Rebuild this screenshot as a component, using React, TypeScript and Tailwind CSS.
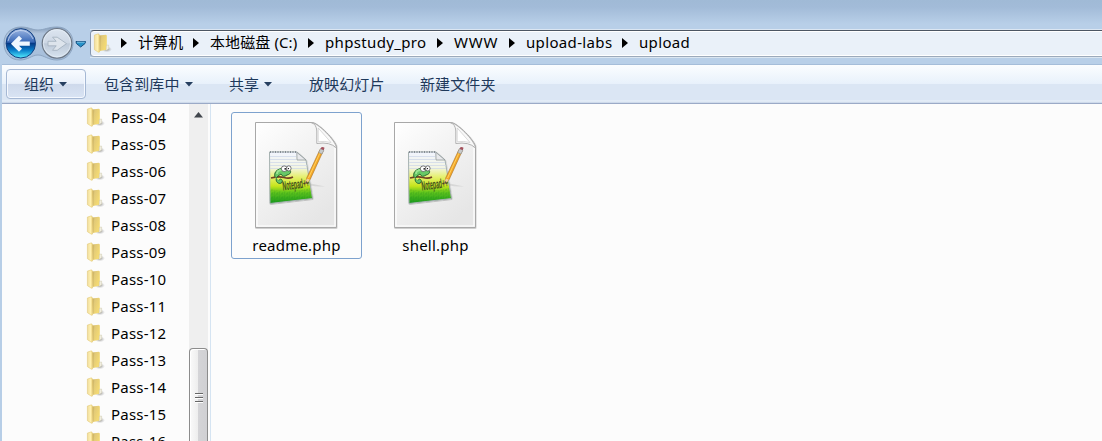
import React from "react";

const crumbs = [
  { label: "计算机", width: "w-[72px]", spacing: "tracking-[0.1px]" },
  { label: "本地磁盘 (C:)", width: "w-[115px]", spacing: "tracking-[0.1px]" },
  { label: "phpstudy_pro", width: "w-[129px]", spacing: "tracking-[0.35px]" },
  { label: "WWW", width: "w-[72px]", spacing: "tracking-[0.8px]" },
  { label: "upload-labs", width: "w-[113px]", spacing: "tracking-[0.35px]" },
  { label: "upload", width: "w-[80px]", spacing: "tracking-[0.35px]" },
];

const folders = ["04", "05", "06", "07", "08", "09", "10", "11", "12", "13", "14", "15", "16"];

function FolderIcon() {
  return (
    <svg width="19" height="21" viewBox="0 0 19 21" className="shrink-0">
      <defs>
        <linearGradient id="fBack" x1="0" x2="1">
          <stop offset="0" stopColor="#f0dda0" />
          <stop offset=".6" stopColor="#fff0ae" />
          <stop offset="1" stopColor="#e9cf79" />
        </linearGradient>
        <linearGradient id="fFront" x1="0" x2="1" y1="0" y2="0.6">
          <stop offset="0" stopColor="#c9b065" />
          <stop offset="0.4" stopColor="#e2ca78" />
          <stop offset="1" stopColor="#f6dc72" />
        </linearGradient>
        <radialGradient id="fShade">
          <stop offset="0" stopColor="#666" stopOpacity="0.7" />
          <stop offset="1" stopColor="#999" stopOpacity="0" />
        </radialGradient>
      </defs>
      <ellipse cx="13.8" cy="16.3" rx="5.2" ry="3" fill="url(#fShade)" />
      <path d="M5.5 2.6 13 1.8 13.8 2.5V16.8L7 18Z" fill="url(#fFront)" />
      <path d="M6.9 3.2V17.4" stroke="#9f8541" strokeWidth=".7" opacity=".5" />
      <path d="M13.4 12.3 15.6 12 15.8 15.8 13 17.8Z" fill="#f1eee0" stroke="#bdb693" strokeWidth=".35" />
      <path d="M1.4 2.1 5.5.8 6.6 2.2V18.8Q6.2 19.8 5 19L1.4 16.7Z" fill="url(#fBack)" stroke="#dfc369" strokeWidth=".5" />
    </svg>
  );
}

function NavigationButtons() {
  return (
    <svg width="88" height="38" viewBox="0 0 88 38" className="shrink-0">
      <defs>
        <linearGradient id="backBlue" x1="0" y1="0" x2="0" y2="1">
          <stop offset="0" stopColor="#a0b9e3" />
          <stop offset=".46" stopColor="#3868b7" />
          <stop offset=".5" stopColor="#063885" />
          <stop offset=".73" stopColor="#087cc9" />
          <stop offset="1" stopColor="#55f0ff" />
        </linearGradient>
        <linearGradient id="forwardGray" x1="0" y1="0" x2="0" y2="1">
          <stop offset="0" stopColor="#dce5f0" />
          <stop offset=".48" stopColor="#cdd7e4" />
          <stop offset=".52" stopColor="#bdc9d8" />
          <stop offset="1" stopColor="#d8e4f0" />
        </linearGradient>
        <linearGradient id="navShell" x1="0" y1="0" x2="0" y2="1">
          <stop offset="0" stopColor="#8199b7" />
          <stop offset=".2" stopColor="#b1c5dd" />
          <stop offset="1" stopColor="#a5bedb" />
        </linearGradient>
      </defs>
      <path d="M4 18C4 7 13 2 21 2C29 2 32 5 38 5C44 5 48 2 57 2C67 2 73 9 73 18C73 28 66 35 57 35C48 35 44 30 38 30C32 30 28 35 20 35C10 35 4 28 4 18Z" fill="url(#navShell)" stroke="#8da5c1" />
      <circle cx="20.8" cy="18.3" r="14.7" fill="url(#backBlue)" stroke="#123f80" />
      <path d="M8 16A13 13 0 0 1 33 14" fill="none" stroke="#d9e5f6" opacity=".65" />
      <path d="M29.8 18.7H14M20.5 12.2 14 18.7 20.5 25.2" fill="none" stroke="#eff7ff" strokeWidth="4.3" />
      <circle cx="57" cy="18.3" r="14.8" fill="url(#forwardGray)" stroke="#6c7785" strokeWidth="1.2" />
      <circle cx="57" cy="18.3" r="13.6" fill="none" stroke="#e4ecf5" opacity=".8" />
      <path d="M48 16.3H56.2L52.6 12.2H57.2L66.5 18.6 57.2 25.3H52.5L56.2 20.8H48Z" fill="#dde4ec" stroke="#a1afbd" strokeWidth=".8" />
      <path d="M76 16.5H85.5L85 18.5 80.7 22 76.4 18.5Z" fill="#2692c9" stroke="#164f80" />
      <path d="M77 17.2H84.7" stroke="#80bfe0" />
    </svg>
  );
}

function DownArrow() {
  return <svg width="8" height="5" viewBox="0 0 8 5"><path d="M0 0H8L4 4.5Z" fill="#263f60" /></svg>;
}

function DocumentIcon() {
  return (
    <svg width="88" height="112" viewBox="0 0 88 112" className="mr-px shrink-0">
      <defs>
        <linearGradient id="paper" x1="0" y1="0" x2=".65" y2="1">
          <stop offset="0" stopColor="#fff" />
          <stop offset=".45" stopColor="#f3f3f3" />
          <stop offset="1" stopColor="#e6e6e6" />
        </linearGradient>
        <linearGradient id="note" x1="0" y1="0" x2="0" y2="1">
          <stop offset="0" stopColor="#f2f5ff" />
          <stop offset=".3" stopColor="#f3f5e4" />
          <stop offset=".48" stopColor="#e6f071" />
          <stop offset=".66" stopColor="#c6e51b" />
          <stop offset=".78" stopColor="#62c51b" />
          <stop offset="1" stopColor="#159820" />
        </linearGradient>
        <linearGradient id="fold" x1="0" y1="1" x2="1" y2="0">
          <stop offset="0" stopColor="#fff" />
          <stop offset=".6" stopColor="#f7f7f7" />
          <stop offset="1" stopColor="#bbb" />
        </linearGradient>
        <pattern id="grass" width="5" height="4" patternUnits="userSpaceOnUse">
          <path d="M0 4 1 1M2 4 3 0M4 4 5 2" stroke="#16841b" strokeWidth=".6" opacity=".35" />
        </pattern>
        <filter id="shadow" x="-10%" y="-10%" width="125%" height="125%">
          <feDropShadow dx=".3" dy=".6" stdDeviation=".6" floodOpacity=".3" />
        </filter>
      </defs>
      <path d="M3.5 3.5H60C66 3.5 84.5 22 84.5 28V108.5H3.5Z" fill="url(#paper)" stroke="#a8a8a8" filter="url(#shadow)" />
      <path d="M5 5V107H83V29" fill="none" stroke="white" strokeWidth="1.2" />
      <path d="M59 3.5Q64.5 5 64.8 12V24.5Q78 22.5 84.5 29C84 22 66 3.5 59 3.5Z" fill="url(#fold)" stroke="#aaa" strokeWidth=".9" />
      <path d="M66.2 9V22.7Q73 21.8 79 23.5Z" fill="#fff" stroke="#c5c5c5" strokeWidth=".6" />
      <path d="M17.5 33H45L54 41 60.5 79.5 18 84.5Z" fill="url(#note)" stroke="#a6b2b1" filter="url(#shadow)" />
      <path d="M18 70Q37 75 58.5 69L60 79 18 83.5Z" fill="url(#grass)" />
      <path d="M18 37.5H44M18 40.5H44M18 43.5H54M18 46.5H55M18 49.5H55" stroke="#cbd5e8" strokeWidth=".7" />
      <path d="M18 33H44" stroke="#6d7680" strokeWidth="1.6" strokeDasharray="1 1.5" />
      <path d="M44.8 33.3 45 41H54Z" fill="#e8e9ec" stroke="#92999b" strokeWidth=".8" />
      <path d="M19 59Q27 57 32 58.5T41 58" fill="none" stroke="#714224" strokeWidth="1.7" />
      <path d="M23 58C21 52 28 48 34 50C40 50 40 55 35 56Q31 59 29 55L26 57C22 60 25 66 29.5 64C32 61 28 58.5 27 61.5" fill="#68c866" stroke="#286a31" strokeWidth="1" />
      <path d="M25 55Q25 51 30 51" fill="none" stroke="#9ae492" strokeWidth="1.8" />
      <ellipse cx="32.2" cy="49.7" rx="2.9" ry="2.8" fill="#fff" stroke="#444" strokeWidth=".7" />
      <ellipse cx="36.8" cy="49.4" rx="2.3" ry="2.6" fill="#fff" stroke="#444" strokeWidth=".7" />
      <circle cx="33.2" cy="49.9" r=".8" /><circle cx="36.4" cy="49.6" r=".7" />
      <g transform="translate(31 71.5) rotate(-7) scale(.43 1.1)">
        <text fontFamily="Liberation Sans, sans-serif" fontSize="12" fontWeight="bold" fill="#414e20">Notepad++</text>
      </g>
      <path d="M56 64 73 67.5Q67 68 55 66Z" fill="#aaa" opacity=".3" />
      <path d="M53.3 65 54.8 58.7 68 30.5 71.2 32 58.2 60.5Z" fill="#f5a827" stroke="#a67026" strokeWidth=".6" />
      <path d="M56.5 59 69.3 31" stroke="#ffd060" strokeWidth="1" />
      <path d="M53.3 65 54.8 59.4 57.9 60.7Z" fill="#edcf9b" />
      <path d="M53.3 65 54.1 62.3 55.3 62.9Z" fill="#333" />
      <path d="M66.7 33.5 68.5 29.6 71.9 31.1 70.1 35Z" fill="#c6c9ca" stroke="#818486" strokeWidth=".5" />
      <path d="M68.5 29.7 69.4 28.3Q70.8 27.5 72.5 28.8L71.8 31.3Z" fill="#a4525d" />
    </svg>
  );
}

export default function App() {
  return (
    <main lang="zh-CN" className="flex h-[441px] w-[1102px] flex-col overflow-hidden bg-[#fcfcfc] font-['Noto_Sans','Noto_Sans_CJK_SC',sans-serif] text-[15px] text-black">
      <header className="flex h-16 shrink-0 bg-[linear-gradient(180deg,#a0bad6_0px,#a2bbd8_7px,#b8cfe8_24px,#b8cfe8_64px)] pt-[25px]">
        <NavigationButtons />
        <div className="ml-0.5 mt-1 flex h-[29px] flex-1 border-y border-t-[#dbe6f2] border-b-[#dae6f1]">
          <div className="flex h-[27px] flex-1 items-center rounded-l-sm border border-r-0 border-t-[#4c5663] border-b-[#9caabb] border-l-[#8495ad] bg-[#eaf1f9] pl-0.5 shadow-[inset_0_1px_0_white,inset_0_-1px_0_white]">
            <FolderIcon />
            <div className="ml-[9px] flex items-center pb-px">
              {crumbs.map((c) => (
                <div className={`flex h-6 shrink-0 items-center ${c.width}`} key={c.label}>
                  <svg width="6" height="10" viewBox="0 0 6 10" className="mr-[11px] shrink-0"><path d="M0 0 6 5 0 10Z" fill="black" /></svg>
                  <span className={`whitespace-nowrap pb-px ${c.spacing}`}>{c.label}</span>
                </div>
              ))}
            </div>
          </div>
        </div>
      </header>
      <div className="flex min-h-0 flex-1 border-l-2 border-[#b7cee7]">
        <div className="flex min-w-0 flex-1 flex-col">
          <nav className="flex h-10 shrink-0 items-center border-t border-b border-t-[#a5bdd9] border-b-[#9baac7] bg-[linear-gradient(180deg,#fbfdff_0px,#e8f1fb_19px,#dbe6f4_19px,#dbe6f4_35px,#e9f1fa_36px,#c6d3e6_38px)] pl-1 tracking-[0.1px] text-[#1e395b]">
            <div className="flex h-[30px] w-20 items-center rounded-sm border border-[#a5b8d4] bg-[linear-gradient(180deg,#f8fbff_0%,#e9f0fa_48%,#ced9eb_50%,#d9e4f4_100%)] pl-[17px] shadow-[inset_0_0_0_1px_#f5f9ff]">
              <span>组织</span><span className="ml-[5px]"><DownArrow /></span>
            </div>
            <div className="ml-[18px] flex w-[125px] items-center"><span>包含到库中</span><span className="ml-[5px]"><DownArrow /></span></div>
            <div className="flex w-20 items-center"><span>共享</span><span className="ml-[5px]"><DownArrow /></span></div>
            <div className="w-[111px]">放映幻灯片</div>
            <div>新建文件夹</div>
          </nav>
          <div className="flex min-h-0 flex-1">
            <aside className="w-[187px] overflow-hidden pl-[84px]">
              {folders.map((n) => (
                <div className="flex h-[27px] items-center gap-[6px]" key={n}>
                  <FolderIcon /><span className="whitespace-nowrap tracking-[0.2px]">Pass-{n}</span>
                </div>
              ))}
            </aside>
            <div className="flex w-[21px] flex-col bg-[linear-gradient(90deg,#efefef_19px,#fcfcfc_19px)]">
              <div className="flex h-6 shrink-0 pt-[8px] pl-[5px]">
                <svg width="9" height="6" viewBox="0 0 9 6"><path d="M0 5.5 4.5 0 9 5.5Z" fill="#42474d" /></svg>
              </div>
              <div className="mt-[220px] flex h-[93px] w-[19px] shrink-0 flex-col items-center gap-[2px] rounded-t-sm border border-b-0 border-[#8c8c8c] bg-[linear-gradient(90deg,#fafafa,#eeeeee_45%,#d4d4d7_50%,#d0d0d3)] pt-[44px] shadow-[inset_1px_1px_0_#fff]">
                <span className="h-0.5 w-2 shrink-0 border-b border-b-white bg-[#666]" />
                <span className="h-0.5 w-2 shrink-0 border-b border-b-white bg-[#666]" />
                <span className="h-0.5 w-2 shrink-0 border-b border-b-white bg-[#666]" />
              </div>
            </div>
            <section className="flex flex-1 items-start gap-2 border-l border-[#d5e4f2] pt-2 pl-5">
              {["readme.php", "shell.php"].map((name, i) => (
                <div key={name} className={`flex h-[147px] w-[131px] flex-col items-center rounded-[3px] border pt-1.5 ${i === 0 ? "border-[#7da2ce]" : "border-transparent"}`}>
                  <DocumentIcon />
                  <span className="mt-1 leading-5 tracking-[0.22px]">{name}</span>
                </div>
              ))}
            </section>
          </div>
        </div>
      </div>
    </main>
  );
}
